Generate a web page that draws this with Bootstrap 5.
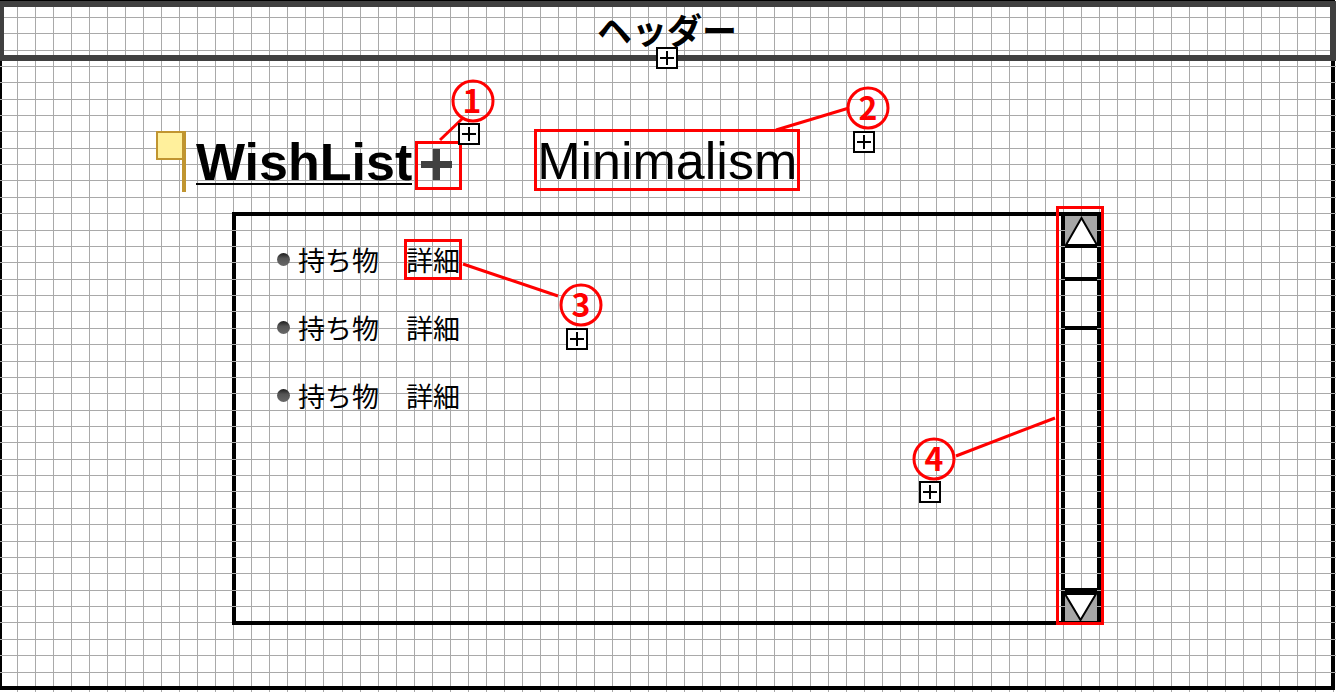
<!DOCTYPE html>
<html lang="ja">
<head>
<meta charset="utf-8">
<meta name="viewport" content="width=device-width, initial-scale=1">
<title>WishList</title>
<link rel="stylesheet" href="https://cdn.jsdelivr.net/npm/bootstrap@5.3.0/dist/css/bootstrap.min.css">
<style>
  body { background: #fff; color: #000; font-family: "Liberation Sans", "Noto Sans CJK JP", sans-serif; }
  a, a:hover { color: #000; text-decoration: none; }
  .grid-layer { inset: 0; pointer-events: none; shape-rendering: crispEdges; }
  .grid-layer path { stroke: #a9a9a9; stroke-width: 1; fill: none; }
  .grid-rows { z-index: 1; bottom: 6px; height: calc(100% - 6px); }
  .front { position: relative; z-index: 2; }

  .sheet { min-height: calc(100vh - 2px); margin-right: 1px; border: solid #000; border-width: 1px 4px 4px 2px; }
  .site-head { margin: 0 -5px 0 -2px; border: 6px solid #404040; border-left-width: 4px; height: 60px; }
  .site-head h1 { font: 700 35px/44px "Noto Sans CJK JP", sans-serif; }
  .head-mark { bottom: -14px; }

  .title-row { padding: 68px 0 0 154px; }
  .flag { margin-top: 2px; }
  .title-group { margin-left: 10px; padding-top: 12px; gap: 3px; }
  .title-group h2 { font-size: 52px; line-height: 42px; font-weight: 700; border-bottom: 2px solid #000; }
  .red-frame { border: 3px solid #f00; }
  .add-btn { width: 47px; height: 49px; background: none; }
  .mode-link { margin-left: 72px; padding-top: 2px; font-size: 52px; line-height: 54px; width: 266px; text-align: center; white-space: nowrap; }

  .panel { margin: 20px 230px 61px; border: 4px solid #000; border-width: 0 4px; padding: 4px 0; }
  .panel::before { content: ""; position: absolute; inset: 0 -4px; border: solid #000; border-width: 4px 0; z-index: 2; pointer-events: none; }
  .things { padding: 23px 0 0 41px; gap: 27px; font: 400 27px/35px "Noto Sans CJK JP", sans-serif; }
  .things li { height: 41px; }
  .dot { width: 13px; height: 13px; margin-right: 8px; background: linear-gradient(#1c1c1c, #555 40%, #686868); }
  .detail { width: 58px; height: 41px; margin-left: 25px; border: 3px solid transparent; }
  .detail.red-frame { border-color: #f00; }

  .scroller { width: 36px; border-left: 4px solid #000; }
  .scroller button { padding: 0; border: 0 solid #000; background: #a6a6a6; display: block; }
  .scroller .up { border-bottom-width: 3px; }
  .scroller .down { border-top-width: 6px; }
  .thumb { margin-top: 29px; height: 53px; border: solid #000; border-width: 4px 0; }
  .scroll-frame { inset: -10px -7px -4px -9px; z-index: 3; pointer-events: none; }

  .note { position: absolute; left: -3px; top: -3px; width: 1px; height: 1px; overflow: visible; z-index: 4; pointer-events: none; }
  .note line, .note circle { stroke: #f00; stroke-width: 3; fill: none; }
  .note text { font: 700 32px "Noto Sans CJK JP", sans-serif; fill: #f00; text-anchor: middle; }
</style>
<script src="https://cdn.jsdelivr.net/npm/bootstrap@5.3.0/dist/js/bootstrap.bundle.min.js"></script>
</head>
<body class="position-relative min-vh-100">
<svg class="d-none">
  <symbol id="mark" viewBox="0 0 22 22">
    <rect x="1" y="1" width="20" height="20" fill="#fff" stroke="#000" stroke-width="2"/>
    <path d="M4 11H18M11 4V18" stroke="#000" stroke-width="2"/>
  </symbol>
</svg>
<svg class="grid-layer position-absolute w-100 h-100" aria-hidden="true"><path id="cols"/></svg>
<svg class="grid-layer grid-rows position-absolute w-100" aria-hidden="true"><path id="rows"/></svg>

<div class="sheet position-relative d-flex flex-column">
  <header class="site-head front text-center">
    <h1 class="m-0">ヘッダー</h1>
    <svg class="head-mark position-absolute start-50 translate-middle-x" width="22" height="22"><use href="#mark"/></svg>
  </header>

  <div class="title-row d-flex align-items-start">
    <svg class="flag front flex-shrink-0" width="30" height="61" aria-hidden="true">
      <rect x="1" y="1" width="27" height="27" fill="#fff09c" stroke="#c09530" stroke-width="2"/>
      <rect x="26" y="0" width="4" height="61" fill="#c09530"/>
    </svg>
    <div class="title-group front d-flex align-items-start">
      <h2 class="m-0">WishList</h2>
      <button class="add-btn red-frame position-relative p-0" type="button" aria-label="追加">
        <svg class="d-block" width="41" height="43"><path d="M3 20.500H34M18.500 5V36" stroke="#404040" stroke-width="7"/></svg>
        <svg class="note"><line x1="25" y1="-1" x2="48" y2="-23"/>
          <circle cx="58" cy="-40" r="20"/><text x="57" y="-28">1</text>
          <use href="#mark" x="43" y="-18" width="22" height="22"/></svg>
      </button>
    </div>
    <a class="mode-link red-frame front" href="#">Minimalism
      <svg class="note"><line x1="242" y1="1" x2="315" y2="-21"/>
        <circle cx="334" cy="-21" r="20"/><text x="334" y="-9">2</text>
        <use href="#mark" x="319" y="2" width="22" height="22"/></svg>
    </a>
  </div>

  <main class="panel position-relative flex-grow-1 d-flex">
    <ul class="things front list-unstyled m-0 flex-grow-1 d-flex flex-column">
      <li class="d-flex align-items-center"><span class="dot rounded-circle"></span><span>持ち物</span>
        <a class="detail red-frame position-relative d-flex justify-content-center align-items-center text-nowrap" href="#">詳細
          <svg class="note"><line x1="59" y1="25" x2="154" y2="57"/>
            <circle cx="177" cy="66" r="20"/><text x="177" y="78">3</text>
            <use href="#mark" x="162" y="89" width="22" height="22"/></svg>
        </a></li>
      <li class="d-flex align-items-center"><span class="dot rounded-circle"></span><span>持ち物</span>
        <a class="detail d-flex justify-content-center align-items-center text-nowrap" href="#">詳細</a></li>
      <li class="d-flex align-items-center"><span class="dot rounded-circle"></span><span>持ち物</span>
        <a class="detail d-flex justify-content-center align-items-center text-nowrap" href="#">詳細</a></li>
    </ul>
    <div class="scroller position-relative d-flex flex-column flex-shrink-0">
      <button class="up front" type="button" aria-label="上へ"><svg class="d-block" width="32" height="29"><path d="M1 29L16.500 2L32 29Z" fill="#fff" stroke="#000" stroke-width="2"/></svg></button>
      <div class="thumb front"></div>
      <button class="down front mt-auto" type="button" aria-label="下へ"><svg class="d-block" width="32" height="27"><path d="M0 0L15.500 26L31 0Z" fill="#fff" stroke="#000" stroke-width="2"/></svg></button>
      <div class="scroll-frame red-frame position-absolute">
        <svg class="note"><line x1="-100" y1="250" x2="-1" y2="212"/>
          <circle cx="-122" cy="253" r="20"/><text x="-122" y="265">4</text>
          <use href="#mark" x="-137" y="275" width="22" height="22"/></svg>
      </div>
    </div>
  </main>
</div>

<script>
  // Ruled paper: lines snap to whole pixels and fill the window.
  function rule() {
    const w = document.body.clientWidth, h = document.body.scrollHeight;
    let cols = '', rows = '';
    for (let i = 0; 17 + i * 18.028 < w; i++) cols += 'M' + (Math.round(17 + i * 18.028) + 0.5) + ' 0V' + h;
    for (let i = 0; 17 + i * 16.368 < h; i++) rows += 'M0 ' + (Math.floor(17.3 + i * 16.368) + 0.5) + 'H' + w;
    document.getElementById('cols').setAttribute('d', cols);
    document.getElementById('rows').setAttribute('d', rows);
  }
  rule();
  addEventListener('resize', rule);
</script>
</body>
</html>
